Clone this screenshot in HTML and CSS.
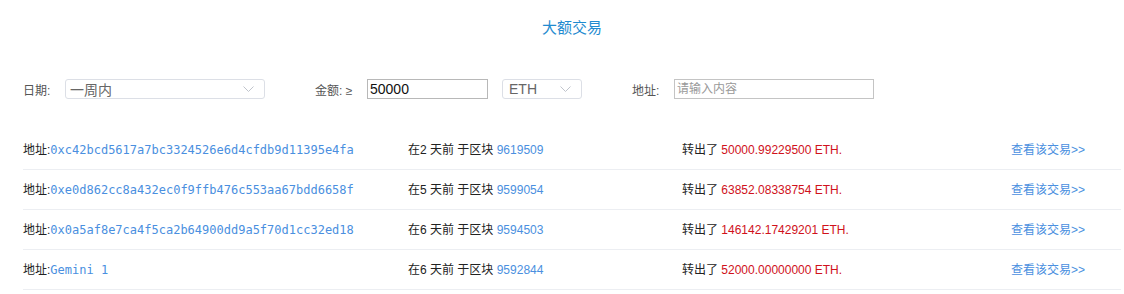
FILE: index.html
```html
<!DOCTYPE html>
<html lang="zh-CN">
<head>
  <meta charset="UTF-8" />
  <meta name="viewport" content="width=device-width, initial-scale=1.0" />
  <title>大额交易</title>
  <link rel="stylesheet" href="styles.css">
</head>
<body>
  <div class="page">
    <h1 class="title">大额交易</h1>

    <div class="filters">
      <div class="group">
        <span class="f-label date-label">日期:</span>
        <div class="select date-select">
          <span>一周内</span>
          <svg class="chevron" width="11" height="6" viewBox="0 0 11 6"><polyline points="0.5,0.5 5.5,5.5 10.5,0.5" fill="none" stroke="#c0c4cc" stroke-width="1"/></svg>
        </div>
      </div>
      <div class="group amount-group">
        <span class="f-label amount-label">金额: ≥</span>
        <input class="text-input amount-input" type="text" value="50000">
        <div class="select unit-select">
          <span>ETH</span>
          <svg class="chevron" width="11" height="6" viewBox="0 0 11 6"><polyline points="0.5,0.5 5.5,5.5 10.5,0.5" fill="none" stroke="#c0c4cc" stroke-width="1"/></svg>
        </div>
      </div>
      <div class="group addr-group">
        <span class="f-label addr-label">地址:</span>
        <input class="text-input addr-input" type="text" placeholder="请输入内容">
      </div>
    </div>

    <ul class="tx-list">
      <li class="tx-row">
        <span>地址:<a class="addr">0xc42bcd5617a7bc3324526e6d4cfdb9d11395e4fa</a></span>
        <span>在2 天前 于区块 <a class="block">9619509</a></span>
        <span>转出了 <span class="amount">50000.99229500 ETH.</span></span>
        <a class="view">查看该交易&gt;&gt;</a>
      </li>
      <li class="tx-row">
        <span>地址:<a class="addr">0xe0d862cc8a432ec0f9ffb476c553aa67bdd6658f</a></span>
        <span>在5 天前 于区块 <a class="block">9599054</a></span>
        <span>转出了 <span class="amount">63852.08338754 ETH.</span></span>
        <a class="view">查看该交易&gt;&gt;</a>
      </li>
      <li class="tx-row">
        <span>地址:<a class="addr">0x0a5af8e7ca4f5ca2b64900dd9a5f70d1cc32ed18</a></span>
        <span>在6 天前 于区块 <a class="block">9594503</a></span>
        <span>转出了 <span class="amount">146142.17429201 ETH.</span></span>
        <a class="view">查看该交易&gt;&gt;</a>
      </li>
      <li class="tx-row">
        <span>地址:<a class="addr">Gemini 1</a></span>
        <span>在6 天前 于区块 <a class="block">9592844</a></span>
        <span>转出了 <span class="amount">52000.00000000 ETH.</span></span>
        <a class="view">查看该交易&gt;&gt;</a>
      </li>
    </ul>
  </div>
</body>
</html>
```

FILE: styles.css
```css
body { margin: 0; background: #fff; color: #333; font-family: "Liberation Sans", "Noto Sans CJK SC", sans-serif; font-size: 12px; }
.page { margin: 0 3px 0 23px; }

.title { margin: 0; padding-top: 18px; line-height: 20px; font-size: 15px; font-weight: normal; text-align: center; color: #1f8bd0; }

.filters { display: flex; align-items: center; margin-top: 41px; height: 20px; }
.group { display: flex; align-items: center; }
.amount-group { margin-left: 50px; }
.addr-group { margin-left: 50px; }
.f-label { color: #555; }
.date-label, .addr-label { width: 42px; }
.amount-label { width: 52px; }

.select { box-sizing: border-box; height: 20px; border: 1px solid #dcdfe6; border-radius: 3px; display: flex; align-items: center; justify-content: space-between; padding: 0 10px 0 4px; font-size: 14px; color: #666; }
.date-select { width: 200px; }
.unit-select { width: 80px; margin-left: 14px; padding-left: 6px; }
.chevron { display: block; }

.text-input { box-sizing: border-box; height: 20px; margin: 0; border: 1px solid #b8b8b8; border-radius: 0; padding: 0 2px; font-family: inherit; outline: none; }
.amount-input { width: 121px; font-size: 14px; color: #111; }
.addr-input { width: 200px; font-size: 12px; border-color: #c4c4c4; }
.addr-input::placeholder { color: #999; }

.tx-list { list-style: none; margin: 31px 0 0; padding: 0; }
.tx-row { display: grid; grid-template-columns: 385px 274px 329px 1fr; align-items: center; height: 36px; padding-bottom: 3px; border-bottom: 1px solid #eceef2; color: #222; }
.addr { font-family: "DejaVu Sans Mono", monospace; color: #4a8fe0; }
.block { color: #4a8fe0; }
.amount { color: #d0111b; }
.view { color: #4a8fe0; }
```
